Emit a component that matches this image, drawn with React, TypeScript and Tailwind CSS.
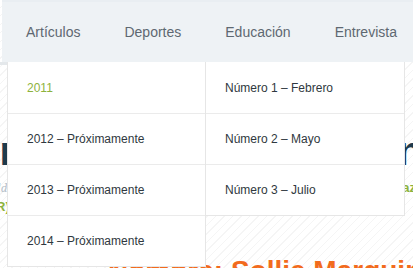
const left = ['2011', '2012 – Próximamente', '2013 – Próximamente', '2014 – Próximamente']
const right = ['Número 1 – Febrero', 'Número 2 – Mayo', 'Número 3 – Julio']
const nav = ['Artículos', 'Deportes', 'Educación', 'Entrevista']

function Column({ items, className }: { items: string[]; className: string }) {
  return (
    <ul className={className}>
      {items.map((t, i) => (
        <li key={t}
          className={`h-[51px] flex items-center pl-[19px] text-[12px] ${i > 0 ? 'border-t border-[#ebebeb]' : ''} ${t === '2011' ? 'text-[#8db23c]' : 'text-[#2f3840]'}`}>
          {t}
        </li>
      ))}
    </ul>
  )
}

export default function App() {
  return (
    <div className="relative w-[413px] h-[268px] overflow-hidden bg-[repeating-linear-gradient(135deg,#ffffff_0px,#ffffff_5px,#f5f5f5_5px,#f5f5f5_6px)]"
      style={{ fontFamily: '"Liberation Sans", Arial, sans-serif' }}>
      <nav className="h-[62px] ml-[2px] bg-[#eef2f5] border-t-2 border-[#e9eef2] flex items-center gap-[44px] pl-[24px] text-[14px] text-[#5e6871]">
        {nav.map(n => <span key={n}>{n}</span>)}
      </nav>
      <div className="h-[3px] w-[7px] bg-[#e4e8eb]" />

      <div className="pt-[62px] flex flex-col">
        <h1 className="whitespace-nowrap text-[40px] leading-[48px] font-bold text-[#1e3a4c] -ml-[24px] tracking-tight">
          nnnnnnnnnnnnnnnnnnnnnnnnnnnnnnnnnnnnnnnnnnn
        </h1>
        <div className="flex justify-between items-end h-[22px] text-[13px]">
          <span className="italic text-[#b8c2cc] -ml-[6px] font-serif">dd</span>
          <span className="font-bold text-[#8db23c] -mr-[3px]">az</span>
        </div>
        <div className="h-[20px] text-[13px] font-bold text-[#8db23c] -ml-[4px]">R)</div>
        <div className="pt-[37px] pl-[108px] whitespace-nowrap text-[28px] leading-[34px] font-bold text-[#f26b1d]">
          Nombre: Sollie Marquina
        </div>
      </div>

      <div className="absolute left-[7px] top-[62px] flex items-start">
        <Column items={left} className="w-[199px] bg-white border border-t-0 border-[#e6e6e6]" />
        <Column items={right} className="w-[199px] bg-white border border-t-0 border-l-0 border-[#e6e6e6]" />
      </div>
    </div>
  )
}
